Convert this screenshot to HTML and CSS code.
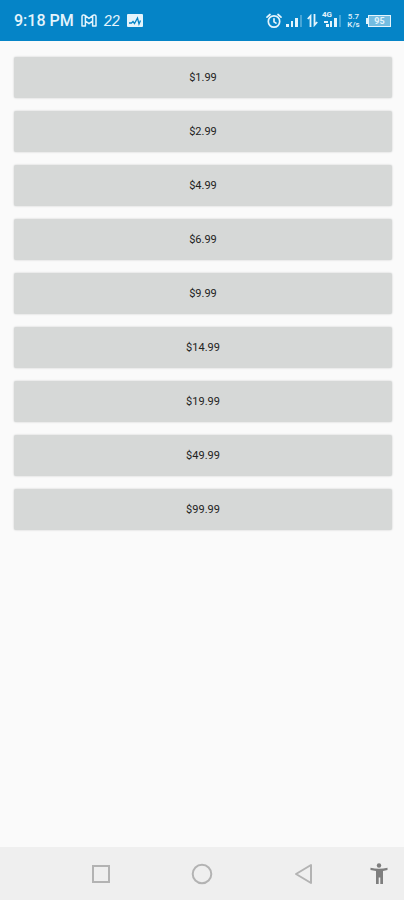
FILE: index.html
```html
<!DOCTYPE html>
<html lang="en">
<head>
<meta charset="utf-8">
<meta name="viewport" content="width=device-width, initial-scale=1">
<title>Prices</title>
<link rel="stylesheet" href="styles.css">
</head>
<body>
<header class="status">
  <div class="status-left">
    <span class="clock">9:18 PM</span>
    <svg width="16" height="13" viewBox="0 0 16 13" fill="none" stroke="currentColor" stroke-width="1.5" stroke-linejoin="round" aria-hidden="true"><path d="M1 2.500V12H4.400V7L8 9.700 11.600 7v5H15V2.500C15 .8 13 .5 11.600 1.600L8 4.500 4.400 1.600C3 .5 1 .8 1 2.500ZM4.400 1.600V7M11.600 1.600V7"/></svg>
    <span class="tag">22</span>
    <svg width="16" height="13" viewBox="0 0 16 13" aria-hidden="true"><rect width="16" height="13" rx="1" fill="currentColor"/><path d="M2 9h2.500L6 7.500l1.500 2L10.500 4l1.500 6 1.500-3.500" fill="none" stroke="#0584c7" stroke-width="1.300"/></svg>
  </div>
  <div class="status-right">
    <svg width="16" height="16" viewBox="0 0 16 16" fill="none" stroke="currentColor" stroke-width="1.700" stroke-linecap="round" aria-hidden="true"><circle cx="8" cy="8.500" r="5.700"/><path d="M8 5.800v3l2 1.300M1 4.200l3-2.700M15 4.200l-3-2.700"/></svg>
    <svg width="17" height="13" viewBox="0 0 17 13" fill="currentColor" aria-hidden="true"><path d="M0 10h3v3H0zM5 7h2v6H5zM9 4h3v9H9z"/><path d="M14 1h2v12h-2z" opacity=".3"/></svg>
    <svg width="11" height="13" viewBox="0 0 11 13" fill="none" stroke="currentColor" stroke-width="1.800" aria-hidden="true"><path d="M3.500 13V2L.800 5M7.500 0v11l2.700-3"/></svg>
    <span class="mobile">
      <span class="network">4G</span>
      <svg width="17" height="13" viewBox="0 0 17 13" fill="currentColor" aria-hidden="true"><path d="M0 7h4v2H0zM2 10h3v3H2zM6 7h2v6H6zM10 4h3v9h-3z"/><path d="M15 1h2v12h-2z" opacity=".3"/></svg>
    </span>
    <span class="speed"><span>5.7</span><span>K/s</span></span>
    <span class="battery"><span class="level">95</span></span>
  </div>
</header>
<main class="prices">
  <button type="button">$1.99</button>
  <button type="button">$2.99</button>
  <button type="button">$4.99</button>
  <button type="button">$6.99</button>
  <button type="button">$9.99</button>
  <button type="button">$14.99</button>
  <button type="button">$19.99</button>
  <button type="button">$49.99</button>
  <button type="button">$99.99</button>
</main>
<nav class="system">
  <button type="button" aria-label="Recent apps"><svg width="22" height="22" viewBox="0 0 22 22" fill="none" stroke="#b3b3b3" stroke-width="2"><path d="M3 3h16v16H3z"/></svg></button>
  <button type="button" aria-label="Home"><svg width="22" height="22" viewBox="0 0 22 22" fill="none" stroke="#b3b3b3" stroke-width="2"><circle cx="11" cy="11" r="9.300"/></svg></button>
  <button type="button" aria-label="Back"><svg width="22" height="22" viewBox="0 0 22 22" fill="none" stroke="#b3b3b3" stroke-width="2" stroke-linejoin="round"><path d="M19 2v18L4 11z"/></svg></button>
  <button type="button" aria-label="Accessibility"><svg width="22" height="22" viewBox="0 0 22 22" fill="#7e7e7e"><circle cx="11" cy="2.500" r="2.200"/><path d="M2.500 4.800Q11 6.800 19.500 4.800V6.900L15 8V21H12.300V14.500H10.700V21H8V8L2.500 6.900Z"/></svg></button>
</nav>
</body>
</html>
```
FILE: styles.css
```css
* {
  box-sizing: border-box;
}

body {
  margin: 0;
  min-height: 100vh;
  display: flex;
  flex-direction: column;
  background: #fafafa;
  color: #222;
  font-family: Roboto, "Liberation Sans", sans-serif;
}

svg {
  display: block;
  flex: none;
}

.status {
  display: flex;
  justify-content: space-between;
  align-items: center;
  height: 41px;
  padding: 0 13px 0 14px;
  background: #0584c7;
  color: #e4f4fc;
}

.status-left,
.status-right {
  display: flex;
  align-items: center;
}

.status-left {
  gap: 7px;
}

.status-right {
  gap: 4px;
}

.clock {
  font-size: 16px;
  font-weight: 500;
  line-height: 20px;
}

.tag {
  font-size: 15px;
  font-style: italic;
  line-height: 16px;
}

.mobile {
  position: relative;
  padding-left: 2px;
}

.network {
  position: absolute;
  top: -3px;
  left: 0;
  font-size: 8px;
  font-weight: 700;
  line-height: 8px;
}

.speed {
  display: flex;
  flex-direction: column;
  align-items: center;
  width: 17px;
  font-size: 8px;
  font-weight: 500;
  line-height: 8px;
}

.battery {
  display: flex;
  align-items: center;
}

.battery::before {
  content: "";
  width: 2px;
  height: 6px;
  background: currentColor;
}

.level {
  width: 23px;
  border: 1px solid currentColor;
  background: #73bce1;
  font-size: 9px;
  font-weight: 700;
  line-height: 10px;
  text-align: center;
}

.prices {
  flex: 1;
  display: flex;
  flex-direction: column;
  gap: 13px;
  padding: 16px 12px 16px 14px;
}

.prices button {
  height: 41px;
  padding: 0;
  border: 0;
  border-radius: 2px;
  background: #d6d8d7;
  box-shadow: 0 0 2px #c4c6c6;
  color: #222;
  font: 400 11px/17px Roboto, "Liberation Sans", sans-serif;
}

.system {
  display: grid;
  grid-template-columns: 2fr 2fr 2fr 1fr;
  height: 53px;
  padding-left: 12.5%;
  background: #efefef;
}

.system button {
  display: flex;
  align-items: center;
  justify-content: center;
  padding: 0;
  border: 0;
  background: none;
}
```
